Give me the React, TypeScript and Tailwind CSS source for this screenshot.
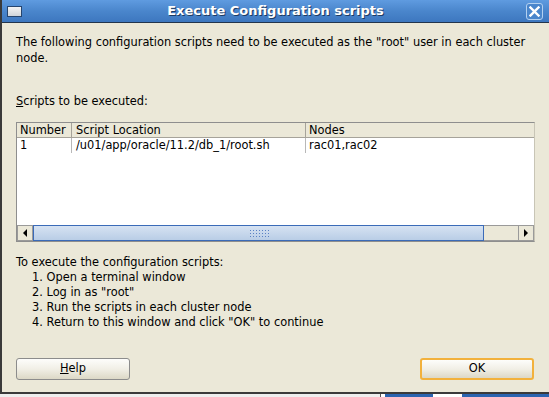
import React from 'react';

const font = { fontFamily: '"DejaVu Sans", "Liberation Sans", sans-serif' };

function Scrollbar() {
  return (
    <div className="flex h-[16px] bg-[#ebe8d8]">
      <div className="w-[16px] h-full border border-[#9a9a9a] bg-[#ebe8d8] flex items-center justify-center">
        <div className="w-0 h-0 border-y-[4px] border-y-transparent border-r-[4px] border-r-black" />
      </div>
      <div className="w-[451px] h-full border border-[#3b6bb8] bg-gradient-to-b from-[#d6e2f2] to-[#b9cde6] flex items-center justify-center">
        <div className="w-[20px] h-[9px] bg-[radial-gradient(circle,#5a82c4_0.8px,transparent_1px)] bg-[length:3px_3px]" />
      </div>
      <div className="flex-1 h-full border-y border-[#9a9a9a] bg-[#ebe8d8]" />
      <div className="w-[16px] h-full border border-[#9a9a9a] bg-[#ebe8d8] flex items-center justify-center">
        <div className="w-0 h-0 border-y-[4px] border-y-transparent border-l-[4px] border-l-black" />
      </div>
    </div>
  );
}

function Button({ children, focused }: { children: React.ReactNode; focused?: boolean }) {
  return (
    <div
      className={
        'w-[114px] h-[22px] rounded-[3px] flex items-center justify-center text-[11.4px] text-black bg-gradient-to-b from-[#fdfdfb] via-[#f1efe6] to-[#dcd8c6] ' +
        (focused ? 'border-2 border-[#f2b13c]' : 'border border-[#8c8c8c]')
      }
    >
      {children}
    </div>
  );
}

export default function App() {
  return (
    <div className="w-[549px] h-[397px] bg-[#eeeeee] overflow-hidden text-[11.4px] text-black" style={font}>
      <div className="h-[394px] flex flex-col border-l-2 border-b-2 border-[#3a3a3a] bg-[#ebe8d8]">
        {/* title bar */}
        <div className="relative h-[23px] shrink-0 bg-gradient-to-b from-[#5f9be0] via-[#4a86cc] to-[#3d77bf] border-b border-[#22354d] flex items-center justify-center">
          <div className="absolute left-[5px] top-[6px] w-[15px] h-[11px] border border-[#26456e] bg-gradient-to-b from-[#f4f4f4] to-[#cfd4da]" />
          <span className="text-white font-bold text-[13px] [text-shadow:1px_1px_0_#1d3b63]">
            Execute Configuration scripts
          </span>
          <div className="absolute right-[6px] top-[3px] w-[17px] h-[17px] rounded-[3px] border border-[#b3d0f0] bg-[#4a86cc] flex items-center justify-center">
            <svg width="11" height="11" viewBox="0 0 11 11">
              <path d="M1.5 1.5 L9.5 9.5 M9.5 1.5 L1.5 9.5" stroke="white" strokeWidth="2.4" strokeLinecap="square" />
            </svg>
          </div>
        </div>

        <div className="flex-1 flex flex-col pl-[14px] pr-[14px]">
          <p className="mt-[11px] leading-[16px]">
            The following configuration scripts need to be executed as the "root" user in each cluster node.
          </p>

          <p className="mt-[27px] leading-[16px]">
            <span className="underline">S</span>cripts to be executed:
          </p>

          {/* table */}
          <div className="mt-[13px] w-[519px] border border-[#8e8e8e] border-r-[#c8c5b6] bg-white">
            <div className="flex h-[15px] bg-[#ebe8d8] border-b border-[#a6a39a] leading-[14px]">
              <div className="w-[55px] px-[3px] border-r border-[#a6a39a]">Number</div>
              <div className="w-[234px] px-[4px] border-r border-[#a6a39a]">Script Location</div>
              <div className="flex-1 px-[3px]">Nodes</div>
            </div>
            <div className="flex h-[15px] leading-[14px]">
              <div className="w-[55px] px-[3px] border-r border-[#b8b8b8]">1</div>
              <div className="w-[234px] px-[4px] border-r border-[#b8b8b8]">/u01/app/oracle/11.2/db_1/root.sh</div>
              <div className="flex-1 px-[3px]">rac01,rac02</div>
            </div>
            <div className="h-[72px]" />
            <Scrollbar />
          </div>

          <div className="mt-[13px] leading-[15px]">
            <p>To execute the configuration scripts:</p>
            <ol className="pl-[16px]">
              <li>1. Open a terminal window</li>
              <li>2. Log in as "root"</li>
              <li>3. Run the scripts in each cluster node</li>
              <li>4. Return to this window and click "OK" to continue</li>
            </ol>
          </div>

          <div className="mt-auto mb-[12px] flex justify-between pr-[1px]">
            <Button>
              <span className="underline">H</span>elp
            </Button>
            <Button focused>OK</Button>
          </div>
        </div>
      </div>
      <div className="h-[3px] flex">
        <div className="w-[380px] bg-[#eeeeee]" />
        <div className="w-[1px] bg-[#555]" />
        <div className="w-[4px] bg-white" />
        <div className="w-[48px] bg-[#2b64b0]" />
        <div className="w-[29px] bg-white" />
        <div className="flex-1 bg-[#2b64b0]" />
      </div>
    </div>
  );
}
